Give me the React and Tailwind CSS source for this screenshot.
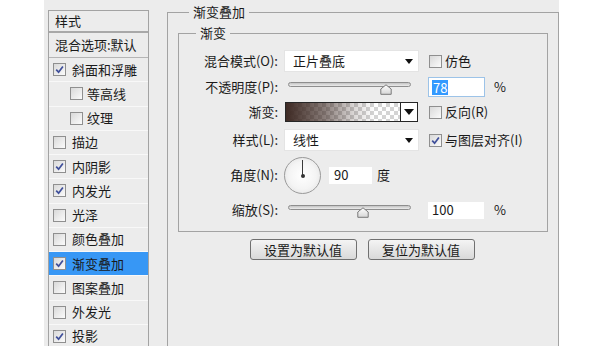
import React from "react";

const FONT = { fontFamily: '"Noto Sans CJK SC", "Liberation Sans", sans-serif' };

function Check({ checked, className = "" }) {
  return (
    <span
      className={
        "flex h-[13px] w-[13px] shrink-0 items-center justify-center border border-[#8f8f8f] bg-gradient-to-br from-[#d9d9d9] to-[#fbfbfb] " +
        className
      }
    >
      {checked && (
        <svg width="9" height="9" viewBox="0 0 9 9">
          <path d="M1.2 4.6 L3.6 7.2 L7.9 1.4" stroke="#3f4f9a" strokeWidth="1.7" fill="none" />
        </svg>
      )}
    </span>
  );
}

function Select({ text }) {
  return (
    <div className="flex h-[22px] w-[135px] items-center justify-between border border-[#e4e4e4] bg-white pl-[8px] pr-[5px]">
      <span>{text}</span>
      <svg width="8" height="5" viewBox="0 0 8 5">
        <path d="M0 0 H8 L4 5 Z" fill="#111" />
      </svg>
    </div>
  );
}

function Slider({ pos }) {
  return (
    <div className="relative h-[14px] w-[123px]">
      <div className="mt-[4px] h-[5px] w-full rounded-full border border-[#8e8e8e] bg-gradient-to-b from-[#c4c4c4] to-[#ececec]" />
      <svg
        className="absolute top-[2px]"
        style={{ left: pos - 6 }}
        width="12"
        height="11"
        viewBox="0 0 12 11"
      >
        <defs>
          <linearGradient id="th" x1="0" y1="0" x2="0" y2="1">
            <stop offset="0" stopColor="#ffffff" />
            <stop offset="1" stopColor="#d6d6d6" />
          </linearGradient>
        </defs>
        <path d="M6 0.8 L11.2 5 V10.3 H0.8 V5 Z" fill="url(#th)" stroke="#7a7a7a" strokeWidth="1" />
      </svg>
    </div>
  );
}

function Button({ children }) {
  return (
    <div className="flex h-[21px] w-[107px] items-center justify-center rounded-[3px] border border-[#707070] bg-gradient-to-b from-[#f4f4f4] to-[#d9d9d9] text-[13px]">
      {children}
    </div>
  );
}

const items = [
  { t: "斜面和浮雕", c: true },
  { t: "等高线", c: false, indent: true },
  { t: "纹理", c: false, indent: true },
  { t: "描边", c: false },
  { t: "内阴影", c: true },
  { t: "内发光", c: true },
  { t: "光泽", c: false },
  { t: "颜色叠加", c: false },
  { t: "渐变叠加", c: true, sel: true },
  { t: "图案叠加", c: false },
  { t: "外发光", c: false },
  { t: "投影", c: true },
];

export default function App() {
  return (
    <div
      className="relative flex h-[346px] w-[595px] overflow-hidden bg-white text-[13px] leading-[18px] text-[#1a1a1a]"
      style={FONT}
    >
      <div className="w-[44px] shrink-0 bg-white" />
      <div className="flex h-full w-[515px] shrink-0 items-start bg-[#ececec] pl-[4px]">
        {/* left panel */}
        <div className="mt-[10px] w-[101px] shrink-0 border-x border-t border-[#a3a3a3]">
          <div className="flex h-[22px] items-center border-b-[2px] border-b-[#a8a8a8] pl-[6px]">样式</div>
          <div className="flex h-[25px] items-center border-b border-[#b5b5b5] pl-[6px] whitespace-nowrap">
            混合选项:默认
          </div>
          {items.map((it) => (
            <div
              key={it.t}
              className={
                "flex h-[24.25px] items-center border-b border-[#f8f8f8] " +
                (it.indent ? "gap-[4px] pl-[21px] " : "gap-[6px] pl-[4px] ") +
                (it.sel ? "bg-[#3797f5]" : "")
              }
            >
              <Check checked={it.c} />
              <span>{it.t}</span>
            </div>
          ))}
        </div>

        {/* outer group */}
        <fieldset className="ml-[18px] mt-[3px] h-[400px] w-[392px] shrink-0 border border-[#a3a3a3]">
          <legend className="ml-[21px] px-[4px] text-[13px] leading-[18px]">渐变叠加</legend>

          <fieldset className="ml-[10px] mt-[3px] w-[370px] border border-[#a3a3a3] pb-[11px]">
            <legend className="ml-[17px] px-[4px] leading-[18px]">渐变</legend>

            {/* row 1 */}
            <div className="mt-[8px] flex h-[22px] items-center">
              <div className="w-[99px] text-right">混合模式(O):</div>
              <div className="ml-[6px]">
                <Select text="正片叠底" />
              </div>
              <div className="ml-[10px] flex items-center gap-[3px]">
                <Check checked={false} />
                <span>仿色</span>
              </div>
            </div>

            {/* row 2 */}
            <div className="mt-[5px] flex h-[20px] items-center">
              <div className="w-[99px] text-right">不透明度(P):</div>
              <div className="ml-[10px]">
                <Slider pos={98} />
              </div>
              <div className="ml-[17px] flex h-[20px] w-[57px] items-center border border-[#9cc3e8] bg-white pl-[3px]">
                <span className="bg-[#3399ff] px-[1px] text-white leading-[15px]">78</span>
              </div>
              <span className="ml-[9px]">%</span>
            </div>

            {/* row 3 */}
            <div className="mt-[5px] flex h-[20px] items-center">
              <div className="w-[99px] text-right">渐变:</div>
              <div className="ml-[7px] flex h-[20px] w-[133px] border border-[#262626]">
                <div className="h-full flex-1 bg-[conic-gradient(#d4d4d4_25%,#ffffff_0_50%,#d4d4d4_0_75%,#ffffff_0)] bg-[length:8px_8px]">
                  <div className="h-full w-full bg-[linear-gradient(to_right,rgba(62,42,36,1)_0%,rgba(62,42,36,0.6)_35%,rgba(62,42,36,0.18)_60%,rgba(62,42,36,0)_78%)]" />
                </div>
                <div className="flex w-[17px] items-center justify-center border-l border-[#262626] bg-white">
                  <svg width="10" height="6" viewBox="0 0 10 6">
                    <path d="M0 0 H10 L5 6 Z" fill="#111" />
                  </svg>
                </div>
              </div>
              <div className="ml-[11px] flex items-center gap-[3px]">
                <Check checked={false} />
                <span>反向(R)</span>
              </div>
            </div>

            {/* row 4 */}
            <div className="mt-[7px] flex h-[22px] items-center">
              <div className="w-[99px] text-right">样式(L):</div>
              <div className="ml-[6px]">
                <Select text="线性" />
              </div>
              <div className="ml-[10px] flex items-center gap-[3px]">
                <Check checked={true} />
                <span>与图层对齐(I)</span>
              </div>
            </div>

            {/* row 5 */}
            <div className="mt-[5px] flex h-[38px] items-center">
              <div className="w-[99px] text-right">角度(N):</div>
              <div className="ml-[6px] flex h-[37px] w-[37px] flex-col items-center rounded-full border border-[#9a9a9a] bg-[radial-gradient(circle,#ffffff_0%,#f4f4f4_55%,#dcdcdc_100%)]">
                <div className="mt-[2px] h-[15px] w-[1.5px] bg-[#3a3a3a]" />
                <div className="mt-[-1px] h-[4px] w-[4px] rounded-full bg-[#333]" />
              </div>
              <div className="ml-[7px] flex h-[19px] w-[45px] items-center border border-[#ececec] bg-white pl-[5px]">
                90
              </div>
              <span className="ml-[4px]">度</span>
            </div>

            {/* row 6 */}
            <div className="mt-[6px] flex h-[20px] items-center">
              <div className="w-[99px] text-right">缩放(S):</div>
              <div className="ml-[10px]">
                <Slider pos={75} />
              </div>
              <div className="ml-[16px] flex h-[19px] w-[58px] items-center border border-[#ececec] bg-white pl-[4px]">
                100
              </div>
              <span className="ml-[9px]">%</span>
            </div>
          </fieldset>

          <div className="mt-[7px] flex justify-center gap-[11px] pr-[2px]">
            <Button>设置为默认值</Button>
            <Button>复位为默认值</Button>
          </div>
        </fieldset>
      </div>
    </div>
  );
}
